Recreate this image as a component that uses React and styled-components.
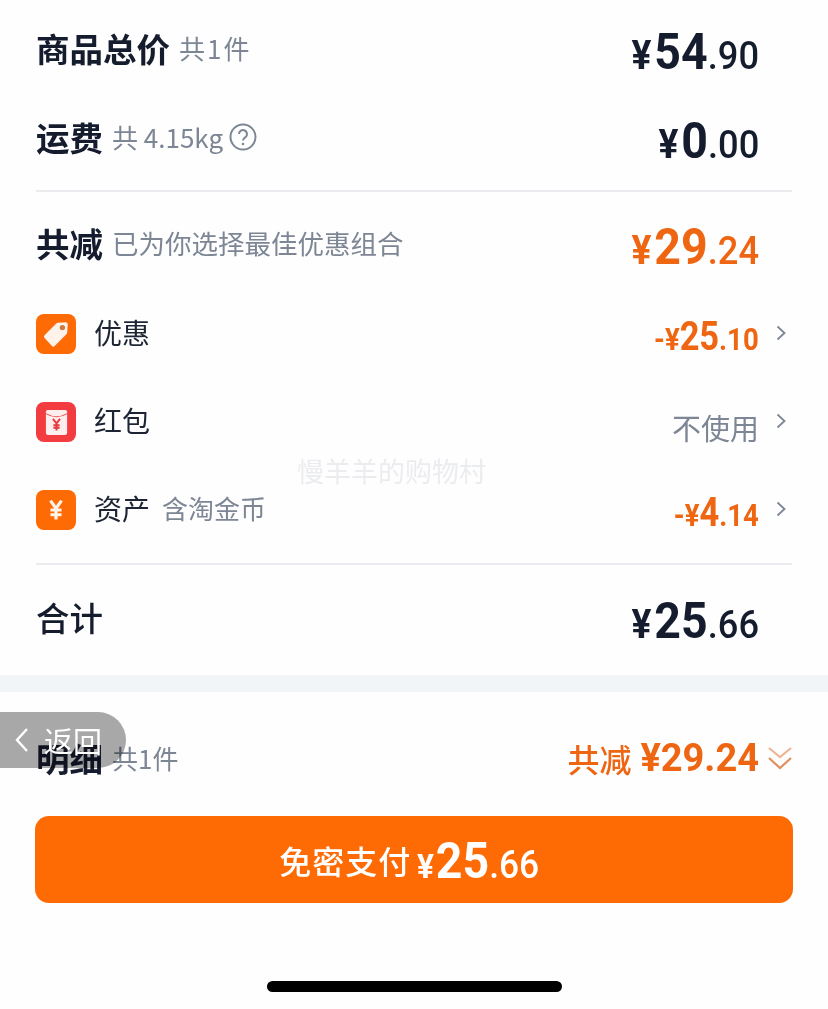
import React from "react";
import styled, { createGlobalStyle } from "styled-components";

const GlobalStyle = createGlobalStyle`
  html, body {
    margin: 0;
    padding: 0;
    background: #fefefe;
    font-family: "Noto Sans CJK SC", "Noto Sans", sans-serif;
  }
`;

const NAVY = "#151c2e";
const GREY = "#7d8694";
const ORANGE = "#ee6512";

const Page = styled.div`
  position: relative;
  width: 828px;
  height: 1009px;
  overflow: hidden;
  background: #fefefe;
  color: ${NAVY};
`;

const Section = styled.section`
  padding: 3px 36px 6px 36px;
`;

const Row = styled.div`
  display: flex;
  align-items: center;
  justify-content: space-between;
  height: ${(p) => p.$h || 88}px;
`;

const SavingRow = styled(Row)`
  margin: 7px 0 3px;
`;

const Left = styled.div`
  display: flex;
  align-items: center;
`;

const Title = styled.span`
  font-size: 33.5px;
  font-weight: ${(p) => p.$weight || 700};
  line-height: 40px;
  margin-right: 9px;
  color: ${NAVY};
`;

const Sub = styled.span`
  font-size: ${(p) => p.$size || 26}px;
  letter-spacing: ${(p) => p.$spacing || 0}px;
  line-height: 36px;
  color: ${GREY};
`;

const ListSub = styled(Sub)`
  margin-top: -5px;
`;

const Label = styled.span`
  font-size: 28px;
  line-height: 36px;
  margin: -5px 12px 0 0;
  color: #1d2433;
`;

const IconBox = styled.span`
  display: flex;
  align-items: center;
  justify-content: center;
  width: 40px;
  height: 40px;
  margin-right: 18px;
  border-radius: 8px;
  background: ${(p) => p.$bg || "#fe6a04"};
`;

const Right = styled.div`
  display: flex;
  align-items: center;
  padding-right: ${(p) => p.$pad || 0}px;
`;

const Amount = styled.span`
  display: inline-block;
  margin-top: ${(p) => p.$drop ?? 20}px;
  font-family: Roboto, "Liberation Sans", sans-serif;
  font-weight: 700;
  white-space: nowrap;
  line-height: 48px;
  color: ${(p) => p.$color || NAVY};
  transform: scaleX(${(p) => p.$scale || 0.93});
  transform-origin: ${(p) => p.$origin || "right"} center;
`;

const Yen = styled.span`
  font-size: ${(p) => p.$size}px;
  margin-right: ${(p) => p.$gap || 0}px;
`;

const Big = styled.span`
  font-size: ${(p) => p.$size}px;
`;

const Small = styled.span`
  font-size: ${(p) => p.$size}px;
  font-weight: ${(p) => p.$weight || 500};
`;

const Slot = styled.span`
  display: flex;
  justify-content: flex-end;
  width: 27px;
  padding-right: 6px;
  margin-top: -2px;
`;

const Plain = styled.span`
  font-size: 29px;
  line-height: 40px;
  margin-top: 10px;
  color: ${GREY};
`;

const Divider = styled.div`
  height: 2px;
  margin-top: ${(p) => p.$top}px;
  background: #e9ebee;
`;

const Band = styled.div`
  height: 17px;
  background: #f2f5f7;
`;

const Detail = styled.div`
  display: flex;
  align-items: center;
  justify-content: space-between;
  height: 60px;
  margin-top: 36px;
  padding: 0 36px;
`;

const DetailSum = styled.div`
  display: flex;
  align-items: center;
  font-size: 32px;
  font-weight: 500;
  color: ${ORANGE};
`;

const DetailPrice = styled.span`
  margin-left: 9px;
  font-family: Roboto, "Liberation Sans", sans-serif;
  font-size: 38px;
  font-weight: 700;
`;

const PayWrap = styled.div`
  padding: 28px 35px 0;
`;

const PayButton = styled.div`
  display: flex;
  align-items: center;
  justify-content: center;
  height: 87px;
  border-radius: 14px;
  background: #fe6a04;
  color: #fff;
`;

const PayText = styled.span`
  font-size: 32px;
  font-weight: 500;
  letter-spacing: 1px;
  margin-right: 6px;
`;

const HomeBar = styled.div`
  width: 295px;
  height: 11px;
  margin: 78px auto 0;
  border-radius: 6px;
  background: #000;
`;

/* the pill darkens what is under it, so 明细 still reads through */
const BackPill = styled.div`
  position: absolute;
  left: 0;
  top: 712px;
  display: flex;
  align-items: center;
  width: 126px;
  height: 56px;
  padding-left: 14px;
  box-sizing: border-box;
  color: #fff;
  font-size: 29px;

  &::before {
    content: "";
    position: absolute;
    inset: 0;
    border-radius: 0 28px 28px 0;
    background: #a9a9a9;
    mix-blend-mode: multiply;
  }

  svg {
    position: relative;
    margin-right: 14px;
  }
`;

const BackText = styled.span`
  position: relative;
`;

const Watermark = styled.div`
  position: absolute;
  left: 297px;
  top: 453px;
  font-size: 27px;
  line-height: 36px;
  color: rgba(170, 175, 185, 0.22);
`;

function Money({ color, parts }) {
  return (
    <Amount $color={color}>
      <Yen $size={40} $gap={3}>{parts[0]}</Yen>
      <Big $size={50}>{parts[1]}</Big>
      <Small $size={39}>{parts[2]}</Small>
    </Amount>
  );
}

function Discount({ parts }) {
  return (
    <Amount $color={ORANGE} $drop={14} $scale={0.86}>
      <Yen $size={32}>{parts[0]}</Yen>
      <Big $size={40}>{parts[1]}</Big>
      <Small $size={32} $weight={700}>{parts[2]}</Small>
    </Amount>
  );
}

function Chevron() {
  return (
    <Slot>
      <svg width="10" height="16" viewBox="0 0 10 16" fill="none">
        <path d="M1.500 1.500L8.500 8l-7 6.500" stroke="#7d8694" strokeWidth="1.800" />
      </svg>
    </Slot>
  );
}

function TagIcon() {
  return (
    <svg width="32" height="32" viewBox="0 0 30 30">
      <path d="M15 5.500a3 3 0 0 1 2-1l7-.5a2 2 0 0 1 2 2l-.5 7.500a3 3 0 0 1-1 2L14 26a2 2 0 0 1-3 0L4.500 19a2 2 0 0 1 0-3z" fill="#fdf3ea" />
      <circle cx="21" cy="9" r="2.500" fill="#cf7a40" />
    </svg>
  );
}

function PacketIcon() {
  return (
    <svg width="23" height="27" viewBox="0 0 26 30">
      <rect x="1" y="1" width="24" height="28" rx="2" fill="#fdeeee" />
      <path d="M1 5q12 7 24 0" fill="none" stroke="#ee4a50" strokeWidth="1.200" />
      <path d="M9 11l4 5 4-5M13 16v8M9.500 18h7M9.500 21h7" fill="none" stroke="#e8383f" strokeWidth="2.200" />
    </svg>
  );
}

function YenIcon() {
  return (
    <svg width="16" height="22" viewBox="0 0 20 28">
      <path d="M3 2l7 10 7-10M10 12v14M3 14h14M3 20h14" fill="none" stroke="#fff4ea" strokeWidth="4" />
    </svg>
  );
}

function HelpIcon() {
  return (
    <svg width="28" height="28" viewBox="0 0 28 28" fill="none" style={{ marginLeft: 6 }}>
      <circle cx="14" cy="14" r="12.500" stroke="#7d8694" strokeWidth="2" />
      <path d="M10 11a4 4 0 1 1 6.500 3.200c-1.500 1-2.500 1.800-2.500 3.300" stroke="#7d8694" strokeWidth="2" />
      <circle cx="14" cy="21" r="1.300" fill="#7d8694" />
    </svg>
  );
}

function DoubleDown() {
  return (
    <svg width="24" height="26" viewBox="0 0 24 26" fill="none" style={{ marginLeft: 9 }}>
      <path d="M1 3l11 9 11-9" stroke="#eeb596" strokeWidth="2.200" />
      <path d="M1 13l11 10 11-10" stroke="#e08f5f" strokeWidth="2.200" />
    </svg>
  );
}

export default function App() {
  return (
    <Page>
      <GlobalStyle />
      <Section>
        <Row $h={89}>
          <Left>
            <Title>商品总价</Title>
            <Sub $spacing={2}>共1件</Sub>
          </Left>
          <Right $pad={33}>
            <Money parts={["¥", "54", ".90"]} />
          </Right>
        </Row>
        <Row $h={89}>
          <Left>
            <Title>运费</Title>
            <Sub>共 4.15kg</Sub>
            <HelpIcon />
          </Left>
          <Right $pad={33}>
            <Money parts={["¥", "0", ".00"]} />
          </Right>
        </Row>
        <Divider $top={9} />
        <SavingRow>
          <Left>
            <Title>共减</Title>
            <Sub $size={26.5}>已为你选择最佳优惠组合</Sub>
          </Left>
          <Right $pad={33}>
            <Money color={ORANGE} parts={["¥", "29", ".24"]} />
          </Right>
        </SavingRow>
        <Row>
          <Left>
            <IconBox><TagIcon /></IconBox>
            <Label>优惠</Label>
          </Left>
          <Right>
            <Discount parts={["-¥", "25", ".10"]} />
            <Chevron />
          </Right>
        </Row>
        <Row>
          <Left>
            <IconBox $bg="#f23c40"><PacketIcon /></IconBox>
            <Label>红包</Label>
          </Left>
          <Right>
            <Plain>不使用</Plain>
            <Chevron />
          </Right>
        </Row>
        <Row>
          <Left>
            <IconBox><YenIcon /></IconBox>
            <Label>资产</Label>
            <ListSub>含淘金币</ListSub>
          </Left>
          <Right>
            <Discount parts={["-¥", "4", ".14"]} />
            <Chevron />
          </Right>
        </Row>
        <Divider $top={9} />
        <Row $h={104}>
          <Left>
            <Title $weight={500}>合计</Title>
          </Left>
          <Right $pad={33}>
            <Money parts={["¥", "25", ".66"]} />
          </Right>
        </Row>
      </Section>
      <Band />
      <Detail>
        <Left>
          <Title>明细</Title>
          <Sub>共1件</Sub>
        </Left>
        <DetailSum>
          共减
          <DetailPrice>¥29.24</DetailPrice>
          <DoubleDown />
        </DetailSum>
      </Detail>
      <PayWrap>
        <PayButton>
          <PayText>免密支付</PayText>
          <Amount $color="#fff" $drop={14} $origin="left">
            <Yen $size={34} $gap={2}>¥</Yen>
            <Big $size={50}>25</Big>
            <Small $size={38}>.66</Small>
          </Amount>
        </PayButton>
      </PayWrap>
      <HomeBar />
      <BackPill>
        <svg width="16" height="26" viewBox="0 0 16 26" fill="none">
          <path d="M13 2L3 13l10 11" stroke="#fff" strokeWidth="2.400" />
        </svg>
        <BackText>返回</BackText>
      </BackPill>
      <Watermark>慢羊羊的购物村</Watermark>
    </Page>
  );
}
